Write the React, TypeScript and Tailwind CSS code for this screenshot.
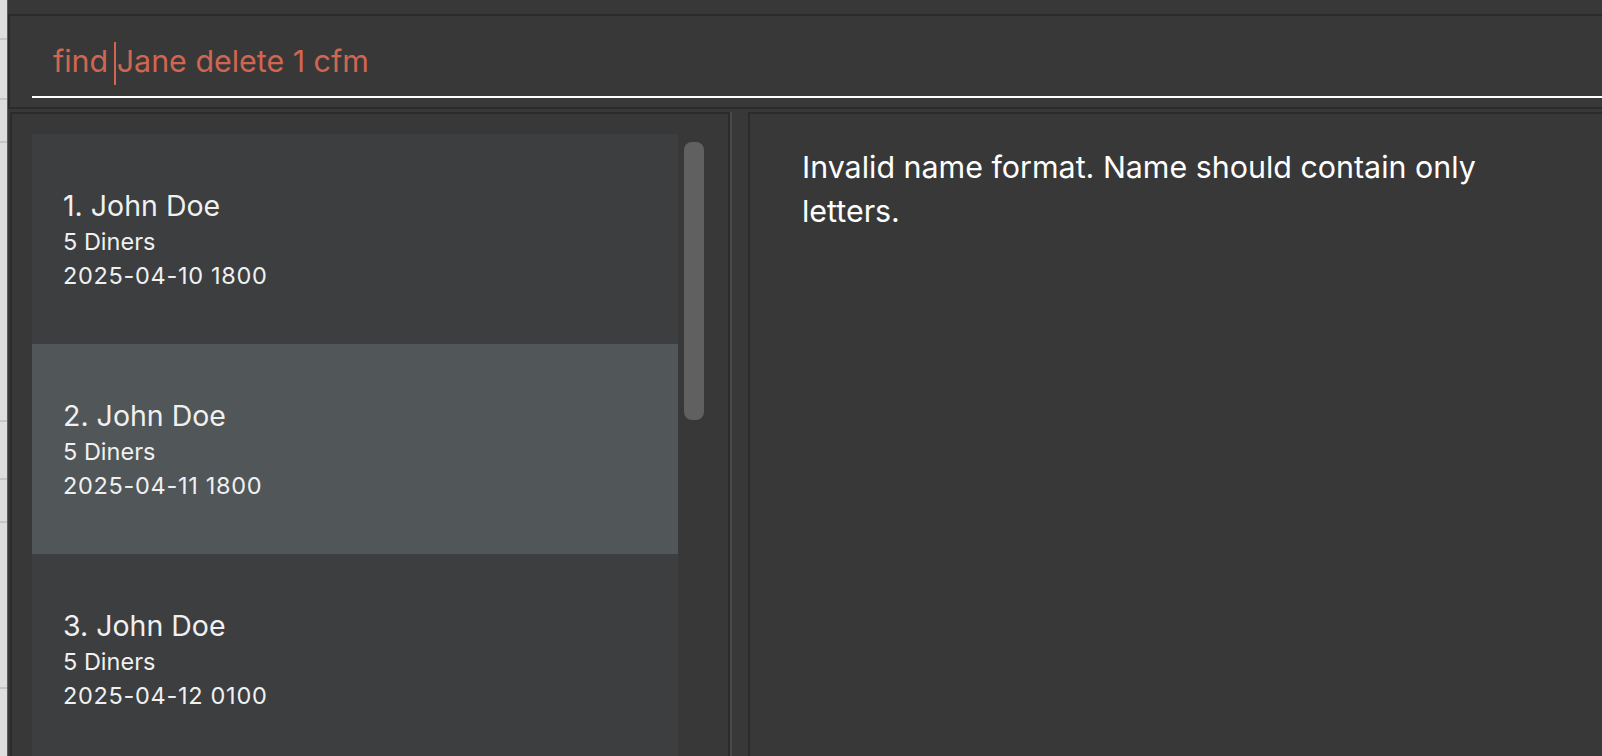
import React from "react";

const cells = [
  { n: "1. John Doe", d: "5 Diners", t: "2025-04-10 1800", bg: "bg-[#3c3e3f]" },
  { n: "2. John Doe", d: "5 Diners", t: "2025-04-11 1800", bg: "bg-[#515658]" },
  { n: "3. John Doe", d: "5 Diners", t: "2025-04-12 0100", bg: "bg-[#3c3e3f]" },
];

function Strip() {
  const gaps = [38, 58, 41, 277, 56, 41, 164];
  return (
    <div className="flex w-[7px] shrink-0 flex-col bg-[#dedede]">
      {gaps.map((g, i) => (
        <React.Fragment key={i}>
          <div style={{ height: g }} className="shrink-0" />
          <div className="h-[2px] shrink-0 bg-[#c6c6c6]" />
        </React.Fragment>
      ))}
    </div>
  );
}

export default function App() {
  return (
    <div
      className="flex h-[756px] w-[1602px] overflow-hidden bg-[#383838]"
      style={{ fontFamily: "Inter, 'Noto Sans', sans-serif" }}
    >
      <Strip />
      <div className="w-[1px] shrink-0 bg-[#5e5e5e]" />
      <div className="flex min-w-0 flex-1 flex-col bg-[#383838]">
        <div className="h-[14px] shrink-0" />
        <div className="h-[2px] shrink-0 bg-[#2b2b2b]" />
        {/* command box */}
        <div className="flex h-[91px] shrink-0 flex-col border-l-2 border-[#2b2b2b] pl-[22px] pt-[25px]">
          <div className="h-[40px] pl-[21px] text-[30.4px] leading-[40px] text-[#d06651] whitespace-pre">
            find{" "}
            <span className="relative">
              <span className="absolute left-[-3px] top-[-1px] h-[43px] w-[2px] bg-[#d06651]" />
            </span>
            Jane delete 1 cfm
          </div>
          <div className="mt-[15px] h-[2px] bg-white" />
        </div>
        <div className="h-[2px] shrink-0 bg-[#2b2b2b]" />
        <div className="h-[3px] shrink-0" />
        {/* lower panels */}
        <div className="flex min-h-0 flex-1 pl-[2px]">
          <div className="flex w-[720px] shrink-0 border-x-2 border-t-2 border-[#2b2b2b] pl-[20px] pt-[20px]">
            <div className="flex w-[646px] shrink-0 flex-col">
              {cells.map((c) => (
                <div
                  key={c.n}
                  className={`${c.bg} h-[210px] shrink-0 pl-[31px] pt-[55px] text-[#f0f0f0]`}
                >
                  <div className="text-[28.5px] leading-[34px]">{c.n}</div>
                  <div className="mt-[2px] text-[23.5px] leading-[34px]">{c.d}</div>
                  <div className="text-[23.5px] leading-[34px] tracking-[0.7px]">{c.t}</div>
                </div>
              ))}
            </div>
            <div className="ml-[6px] mt-[8px] h-[278px] w-[20px] rounded-[8px] bg-[#606060]" />
          </div>
          <div className="w-[2px] shrink-0 bg-[#4a4a4a]" />
          <div className="w-[16px] shrink-0" />
          <div className="min-w-0 flex-1 border-l-2 border-t-2 border-[#2b2b2b] pl-[52px] pt-[31px]">
            <div className="w-[740px] text-[30.4px] leading-[44px] text-white">
              Invalid name format. Name should contain only letters.
            </div>
          </div>
        </div>
      </div>
    </div>
  );
}
